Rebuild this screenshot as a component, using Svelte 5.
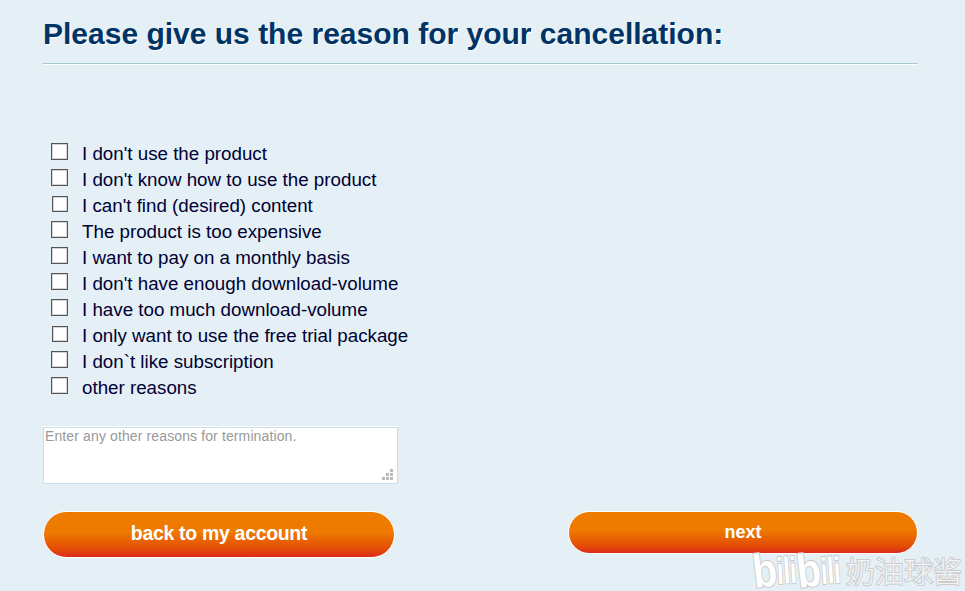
<script>
	let reasons = $state([
		{ text: "I don't use the product", checked: false },
		{ text: "I don't know how to use the product", checked: false },
		{ text: "I can't find (desired) content", checked: false },
		{ text: 'The product is too expensive', checked: false },
		{ text: 'I want to pay on a monthly basis', checked: false },
		{ text: "I don't have enough download-volume", checked: false },
		{ text: 'I have too much download-volume', checked: false },
		{ text: 'I only want to use the free trial package', checked: false },
		{ text: 'I don`t like subscription', checked: false },
		{ text: 'other reasons', checked: false },
	]);
	let comment = $state('');

	const dots = [
		[8, 0],
		[4, 4],
		[8, 4],
		[0, 8],
		[4, 8],
		[8, 8],
	];
</script>

<main>
	<h1>Please give us the reason for your cancellation:</h1>

	<ul>
		{#each reasons as reason, i}
			<li>
				<label>
					<input
						type="checkbox"
						class:small={i % 5 === 2}
						class:raised={i % 5 === 3}
						bind:checked={reason.checked}
					/>
					<span>{reason.text}</span>
				</label>
			</li>
		{/each}
	</ul>

	<div class="comment">
		<textarea bind:value={comment} placeholder="Enter any other reasons for termination."></textarea>
		<svg class="grip" width="11" height="11" viewBox="0 0 11 11">
			{#each dots as [x, y]}
				<rect {x} {y} width="3" height="3" />
			{/each}
		</svg>
	</div>

	<div class="buttons">
		<button class="back">back to my account</button>
		<button class="next">next</button>
	</div>
</main>

<div class="watermark">
	<span class="logo">
		<span class="big">b</span><span class="little">ili</span><span class="big">b</span><span class="little">ili</span>
	</span>
	<span class="name">奶油球酱</span>
</div>

<style>
	:global(body) {
		background: #e5f0f6;
		font-family: 'Liberation Sans', Arial, sans-serif;
	}

	main {
		width: 875px;
		padding: 14px 0 0 43px;
	}

	h1 {
		height: 49px;
		margin: 0;
		border-bottom: 1px solid #abc6d3;
		box-shadow: 0 1px #fff;
		color: #003366;
		font-size: 30px;
		line-height: 40px;
		text-shadow: 1px 1px #fff;
		white-space: nowrap;
	}

	ul {
		margin: 76px 0 0;
		padding: 0 0 0 8px;
		list-style: none;
	}

	label {
		display: flex;
		align-items: center;
		height: 26px;
		color: #000033;
		font-size: 18.75px;
		white-space: nowrap;
	}

	label span {
		padding-top: 2px;
	}

	input {
		box-sizing: border-box;
		width: 17px;
		height: 17px;
		margin: 0 14px 3px 0;
		appearance: none;
		border: 1px solid #555;
		outline: 1px solid rgba(85, 85, 85, 0.25);
		outline-offset: -2px;
		background: #fff;
	}

	input.small {
		width: 16px;
		height: 16px;
		margin-left: 1px;
	}

	input.raised {
		margin-bottom: 4px;
	}

	input:checked {
		background: #003366;
	}

	.comment {
		position: relative;
		width: 355px;
		height: 57px;
		margin-top: 27px;
	}

	textarea {
		display: block;
		box-sizing: border-box;
		width: 100%;
		height: 100%;
		padding: 0 1px;
		resize: none;
		border: 1px solid #c9deeb;
		border-radius: 0;
		box-shadow: 0 -1px #fff;
		font: 14px/16px 'Liberation Sans', Arial, sans-serif;
		letter-spacing: 0.12px;
	}

	textarea::placeholder {
		color: #999;
	}

	.grip {
		position: absolute;
		right: 5px;
		bottom: 4px;
		fill: #bbb;
	}

	.buttons {
		display: flex;
		justify-content: space-between;
		align-items: flex-start;
		margin-top: 27px;
	}

	button {
		padding: 0;
		border: 1px solid #fff;
		border-radius: 24px;
		background: linear-gradient(#ee7a00, #ee7a00 45%, #e34a06 82%, #da251c) border-box;
		color: #fff;
		font-family: inherit;
		font-weight: bold;
	}

	.back {
		width: 352px;
		height: 47px;
		padding-bottom: 3px;
		font-size: 19.5px;
		letter-spacing: -0.32px;
	}

	.next {
		width: 350px;
		height: 43px;
		padding-bottom: 1px;
		font-size: 18px;
	}

	.watermark {
		position: absolute;
		top: 550px;
		left: 755px;
		display: flex;
		height: 41px;
		color: #fff;
		white-space: nowrap;
		pointer-events: none;
	}

	.logo {
		display: flex;
		width: 91px;
		font-weight: bold;
		paint-order: stroke fill;
		-webkit-text-stroke: 2px #c8c8c8;
	}

	.big,
	.little {
		display: block;
		height: 41px;
		line-height: 41px;
	}

	.big {
		width: 21px;
		font-size: 47px;
		line-height: 44px;
		transform: rotate(-7deg) scaleX(0.84);
		transform-origin: 0 100%;
	}

	.little {
		width: 23px;
		font-size: 37px;
		line-height: 43px;
		transform: rotate(-4deg) scaleX(0.64);
		transform-origin: 2px 50%;
	}

	.name {
		color: #f1f5f8;
		font: 300 29px/41px 'Noto Sans CJK SC', sans-serif;
		paint-order: stroke fill;
		-webkit-text-stroke: 2px #ccc;
	}
</style>
